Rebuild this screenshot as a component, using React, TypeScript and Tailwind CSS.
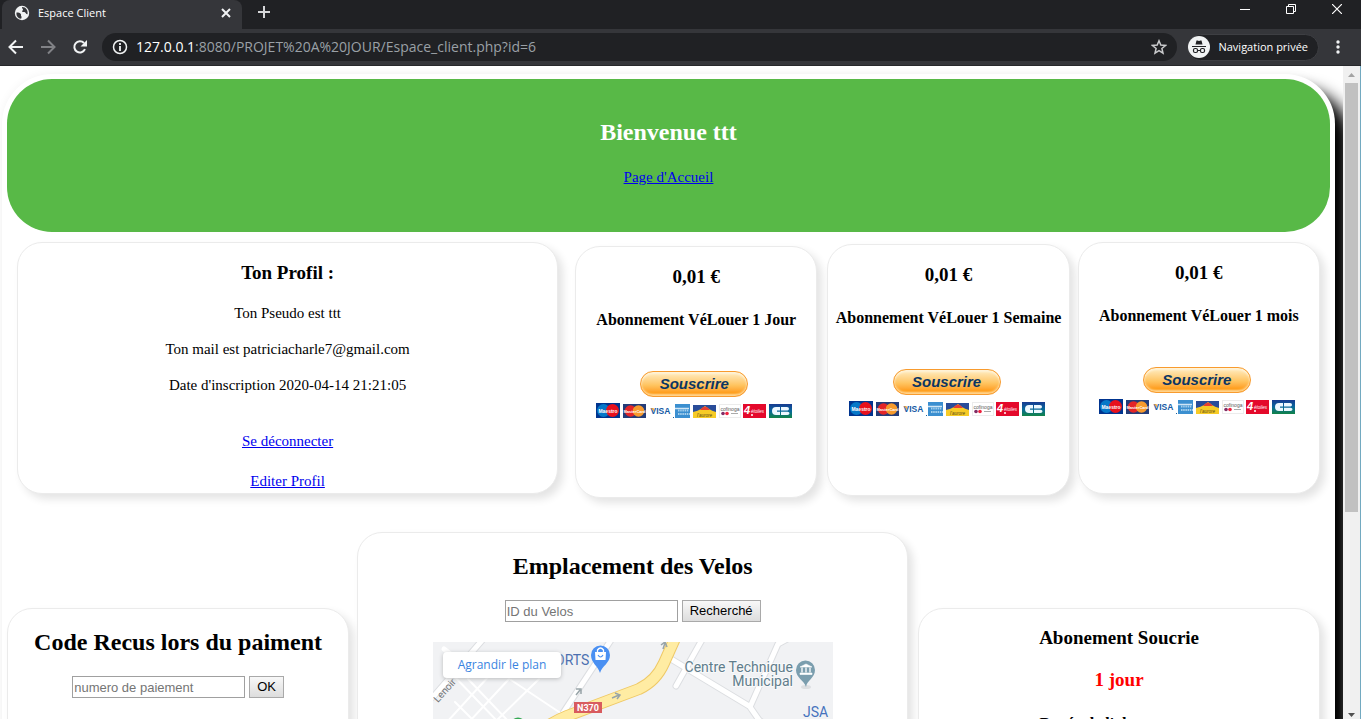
import type { ReactNode } from "react";

const card = "min-w-0 rounded-[25px] border border-[#ebebeb] bg-white text-center shadow-[5px_5px_8px_#e4e4e4]";
const link = "text-[#0000ee] underline";

function BrowserChrome() {
  return (
    <header className="shrink-0 border-b border-[#27282b] bg-[#35363a] font-['Open_Sans',sans-serif] text-white">
      <div className="flex h-[29px] items-start bg-[#202124]">
        <div className="ml-0.5 flex h-full w-60 items-center rounded-t-lg bg-[#35363a] pl-3 pr-2.5">
          <svg className="mb-1 size-4 shrink-0" viewBox="0 0 16 16" aria-hidden="true">
            <circle cx="8" cy="8" r="7.2" fill="#f1f3f4" />
            <path d="M2.5 7.5c2 0 3.5.3 4.300 1.500.7 1-.2 1.500.5 2.300.5.600.3 1.500-.2 2.500C4 13.500 2 11 2.500 7.500zM8 2c-.2 1.500 1 1.500 1 2.600S7.500 6 8.300 6.800c.9.9 2.300.1 3.200 1 .6.600.7 1.700 2 1.500C14.300 5.500 12 2 8 2z" fill="#35363a" />
          </svg>
          <span className="mb-1 ml-2 flex-1 text-[11px] leading-4">Espace Client</span>
          <button aria-label="Fermer l'onglet" className="mb-1 flex size-3 items-center justify-center">
            <svg className="size-2.5" viewBox="0 0 10 10" stroke="#f1f3f4" strokeWidth="2"><path d="M1 1l8 8M9 1L1 9" /></svg>
          </button>
        </div>
        <button aria-label="Nouvel onglet" className="ml-4 mt-1.5 size-3">
          <svg className="size-3" viewBox="0 0 12 12" stroke="#d5d6d8" strokeWidth="2"><path d="M6 0v12M0 6h12" /></svg>
        </button>
        <div className="ml-auto mr-[19px] mt-1 flex items-center gap-9">
          <button aria-label="Réduire" className="size-2.5"><svg className="size-2.5" viewBox="0 0 10 10" stroke="#fff"><path d="M0 5.500h10" /></svg></button>
          <button aria-label="Restaurer" className="size-2.5"><svg className="size-2.5" viewBox="0 0 10 10" fill="none" stroke="#fff"><path d="M.5 2.500h7v7h-7zM2.500 2.500v-2h7v7h-2" /></svg></button>
          <button aria-label="Fermer" className="size-2.5"><svg className="size-2.5" viewBox="0 0 10 10" stroke="#fff" strokeWidth="1.200"><path d="M0 0l10 10M10 0L0 10" /></svg></button>
        </div>
      </div>
      <div className="flex h-9 items-center pl-2 pr-[15px]">
        <button aria-label="Retour" className="size-4"><svg className="size-4" viewBox="0 0 16 16" fill="none" stroke="#f1f3f4" strokeWidth="2"><path d="M15 8H2M8 1.500L1.500 8 8 14.500" /></svg></button>
        <button aria-label="Avancer" className="ml-4 size-4"><svg className="size-4" viewBox="0 0 16 16" fill="none" stroke="#818286" strokeWidth="2"><path d="M1 8h13M8 1.500L14.500 8 8 14.500" /></svg></button>
        <button aria-label="Actualiser" className="ml-4 size-4"><svg className="size-4" viewBox="0 0 16 16"><path d="M13 10.200A5.600 5.600 0 1 1 12 4" fill="none" stroke="#f1f3f4" strokeWidth="2" /><path d="M15 1v6.500H8.500z" fill="#f1f3f4" /></svg></button>
        <div className="ml-3.5 flex h-7 min-w-0 flex-1 items-center rounded-full bg-[#202124] pl-2.5 pr-2.5">
          <svg className="size-4 shrink-0" viewBox="0 0 16 16" fill="none" stroke="#f1f3f4"><circle cx="8" cy="8" r="6.500" strokeWidth="1.500" /><path d="M8 7v5M8 4v2" strokeWidth="1.800" /></svg>
          <span className="ml-2 flex-1 truncate text-sm text-[#9aa0a6]"><span className="text-white">127.0.0.1</span>:8080/PROJET%20A%20JOUR/Espace_client.php?id=6</span>
          <button aria-label="Ajouter aux favoris" className="size-4"><svg className="size-4" viewBox="0 0 16 16" fill="none" stroke="#c9cacc" strokeWidth="1.500"><path d="M8 1.800l1.800 4.300 4.700.4-3.600 3 1.100 4.600L8 11.700l-4 2.400 1.100-4.600-3.600-3 4.700-.4z" /></svg></button>
        </div>
        <div className="ml-2.5 flex h-[27px] items-center rounded-full border border-[#3e3f43] bg-[#202124] pr-2.5">
          <svg className="size-[22px]" viewBox="0 0 22 22"><circle cx="11" cy="11" r="11" fill="#f1f3f4" /><path d="M7.500 8.500l1-4h1l1.500.5 1.500-.5h1l1 4z" fill="#202124" /><path d="M4 10.500h14M10 14.500h2" stroke="#202124" /><g fill="none" stroke="#202124" strokeWidth="1.200"><rect x="5.500" y="12.500" width="4" height="4" rx="1.500" /><rect x="12.500" y="12.500" width="4" height="4" rx="1.500" /></g></svg>
          <span className="ml-2 text-[11px] leading-4">Navigation privée</span>
        </div>
        <button aria-label="Menu" className="ml-[11px] size-4"><svg className="size-4" viewBox="0 0 16 16" fill="#f1f3f4"><circle cx="8" cy="3" r="1.700" /><circle cx="8" cy="8" r="1.700" /><circle cx="8" cy="13" r="1.700" /></svg></button>
      </div>
    </header>
  );
}

function PaymentLogos() {
  return (
    <svg className="mx-auto mt-[5px] h-4 w-[198px]" viewBox="0 0 198 16" fontFamily="Liberation Sans, sans-serif" aria-hidden="true">
      <rect x="1" y="1" width="24" height="15" fill="#00348f" /><circle cx="8.500" cy="8.500" r="6.500" fill="#0678c8" /><circle cx="17.500" cy="8.500" r="6.500" fill="#e8101c" /><text x="13" y="10.500" fontSize="5" fontWeight="700" fill="#fff" textAnchor="middle">Maestro</text>
      <rect x="28" y="2" width="23" height="14" fill="#243c78" /><circle cx="35.500" cy="9" r="5.800" fill="#e42528" /><circle cx="43.500" cy="9" r="5.800" fill="#f79a2c" /><text x="39.500" y="10.500" fontSize="4" fontWeight="700" fill="#fff" textAnchor="middle">MasterCard</text>
      <text x="65.500" y="12" fontSize="8.500" fontWeight="700" fill="#155aa5" textAnchor="middle">VISA</text><path d="M56 6h2.500l1 4z" fill="#e9a53a" />
      <rect x="80" y="2" width="15" height="14" fill="#3b8fd0" /><path d="M80 6.500h14" stroke="#cfe5f5" strokeWidth="1.500" /><path d="M83 8.500h11M83 12h12" stroke="#a5cfec" strokeWidth="2" strokeDasharray="1.500 .7" /><rect x="78" y="15" width="1" height="1" fill="#17609f" />
      <rect x="98" y="3" width="23" height="13" fill="#294c99" /><path d="M98 10q5-1 8-3l4-3 4 3q3 2 7 3v6H98z" fill="#f7cb26" /><path d="M105 8q5-7 10 0z" fill="#e73e32" /><text x="109.500" y="14.500" fontSize="4.500" fontStyle="italic" fill="#564916" textAnchor="middle">l'aurore</text>
      <rect x="124.500" y="2.500" width="21" height="13" fill="#fff" stroke="#ececec" /><text x="135" y="8.500" fontSize="5" fill="#5d5d5d" textAnchor="middle">cofinoga</text><circle cx="128" cy="11.500" r="1.800" fill="#812d65" /><circle cx="132" cy="11.500" r="1.800" fill="#ef223e" /><path d="M136 11.500h7" stroke="#aaa" />
      <rect x="148" y="2" width="23" height="14" fill="#e4092b" /><text x="149" y="12" fontSize="11" fontStyle="italic" fontWeight="700" fill="#fff">4</text><text x="156" y="11" fontSize="4.500" fontStyle="italic" fill="#fff">étoiles</text><circle cx="157" cy="13" r="1" fill="#fff" />
      <defs><linearGradient id="cb" x2="0" y2="1"><stop stopColor="#173a91" /><stop offset=".5" stopColor="#07689c" /><stop offset="1" stopColor="#128447" /></linearGradient></defs>
      <rect x="174" y="2" width="23" height="14" fill="url(#cb)" /><path d="M185 5h-4a4 4 0 0 0 0 8h4V9.700h-3V8.500h3zM186 5h6q2 0 2 1.700t-1.500 1.800h-6.500zM186 9.700h6.500q2 0 2 1.600t-2 1.700h-6.500z" fill="#edf8ff" />
    </svg>
  );
}

function Subscription({ name, className }: { name: string; className: string }) {
  return (
    <section className={`${card} flex-[242] ${className}`}>
      <h3 className="mt-[19px] text-[19px] font-bold leading-[22px]">0,01 €</h3>
      <h4 className="mt-[23px] whitespace-nowrap text-base font-bold leading-[18px]">{name}</h4>
      <div className="mt-[42px] pr-1">
        <button className="block mx-auto h-[26px] w-[108px] rounded-full border border-[#f89b2e] bg-linear-to-b from-[#ffe6b2] from-10% via-[#ffc45f] via-55% to-[#ff9e1b] to-85% font-['Liberation_Sans',sans-serif] text-[15px] font-bold italic leading-5 text-[#0b3563] shadow-[inset_0_2px_2px_#fff3d8,inset_0_-2px_2px_#ffd591]">
          Souscrire
        </button>
        <PaymentLogos />
      </div>
    </section>
  );
}

function SearchForm({ label, children }: { label: string; children: ReactNode }) {
  return (
    <form className="mt-5 flex justify-center gap-1 font-['Liberation_Sans',sans-serif]" onSubmit={(e) => e.preventDefault()}>
      <input aria-label={label} placeholder={label} className="h-[22px] w-[173px] border border-[#a0a0a0] bg-white px-px text-[13px] leading-[18px] placeholder:text-[#757575]" />
      <button className="h-[22px] border border-[#a9a9a9] bg-linear-to-b from-[#f8f8f8] to-[#dddddd] px-[7px] text-[13px] leading-5">{children}</button>
    </form>
  );
}

function BikeMap() {
  return (
    <div className="relative mx-auto mt-5 h-[300px] w-[400px] max-w-full overflow-hidden bg-[#f1f2f4]">
      <svg className="h-[300px] w-[400px]" viewBox="0 0 400 300" fontFamily="Roboto, sans-serif">
        <g fill="none" strokeLinecap="round" strokeLinejoin="round">
          <g stroke="#dcdee1" strokeWidth="7"><path d="M180-5L128 74M52-5L0 55M270-4L243 44M358-5L345 2 317 65 326 78 345 92 348 120M238 17L316 64" /></g>
          <g stroke="#fff" strokeWidth="5"><path d="M180-5L128 74M52-5L0 55M270-4L243 44M358-5L345 2 317 65 326 78 345 92 348 120M238 17L316 64" /></g>
          <g stroke="#fff" strokeWidth="2"><path d="M20 33l46 48M35 37l42 44M78 38l54 36M22 60l20 20M14 80L56 34M36 80l40-43M62 80l44-43" /></g>
          <path d="M11 7l20 16" stroke="#fff" strokeWidth="5" />
          <path d="M100 96q14-14 34-22l72-27q17-8 25-26L244-8" stroke="#efc966" strokeWidth="12" />
          <path d="M100 96q14-14 34-22l72-27q17-8 25-26L244-8" stroke="#ffeca3" strokeWidth="10" />
        </g>
        <g fill="none" stroke="#98a4a8" strokeWidth="1.500"><path d="M143 53l4-5m-4-1h5v5M179 56l7-3m-4-2l5 2-3 4M230 7l2-6m-4 2l4-3 2 5" /></g>
        <text x="122" y="23" fontSize="14" fill="#4c70b0">ORTS</text>
        <path d="M167 31c-2-7-9-10-9-18a9.500 9.500 0 0 1 19 0c0 8-8 11-10 18z" fill="#4a90f2" />
        <path d="M162 10h11l-.5 8h-10z" fill="#fff" /><path d="M164.500 10V8q3-4 6 0v2" fill="none" stroke="#fff" strokeWidth="1.300" /><path d="M165 13q2.500 4 5 0" fill="none" stroke="#4a90f2" strokeWidth="1.200" />
        <g fontSize="14" fill="#607d8b" stroke="#f8f9fa" strokeWidth="2" paintOrder="stroke"><text x="360" y="30" textAnchor="end">Centre Technique</text><text x="360" y="44" textAnchor="end">Municipal</text></g>
        <ellipse cx="373" cy="45" rx="5" ry="2" fill="#dddfe1" />
        <path d="M373 45c-2-7-10-9-10-17a9.500 9.500 0 0 1 19 0c0 8-8 10-9 17z" fill="#7b9eae" />
        <path d="M367 25l6-3 6 3zM367 31h12v1.500h-12z" fill="#fff" stroke="#fff" strokeWidth=".6" /><path d="M369 25.500v5M373 25.500v5M377 25.500v5" stroke="#fff" strokeWidth="1.300" />
        <rect x="141" y="60" width="28" height="11" fill="#d85b5e" /><text x="155" y="69" fontSize="9" fontWeight="700" fill="#fff" textAnchor="middle">N370</text>
        <text x="370" y="75" fontSize="14" fill="#4672bd">JSA</text>
        <text x="5" y="61" fontSize="10" fill="#737679" transform="rotate(-48 5 61)">Lenoir</text>
        <circle cx="85" cy="83" r="7.500" fill="#34a853" />
      </svg>
      <a href="#plan" className="absolute left-2.5 top-2.5 rounded-sm bg-white px-[15px] py-1 font-['Open_Sans',sans-serif] text-xs leading-[18px] text-[#3a84df] shadow-[0_1px_4px_#b9babc]">Agrandir le plan</a>
    </div>
  );
}

function PageScrollbar() {
  return (
    <div className="flex w-[18px] shrink-0 flex-col items-center border-r border-[#72a9c0] bg-[#f0f0f0]" aria-hidden="true">
      <svg className="h-[17px] w-[17px] shrink-0" viewBox="0 0 17 17"><path d="M5 11l3.500-4 3.500 4z" fill="#a3a3a3" /></svg>
      <div className="h-[429px] w-[13px] bg-[#c1c1c1]" />
      <svg className="mt-auto h-[11px] w-[17px] shrink-0" viewBox="0 0 17 11"><path d="M5 5h7L8.500 9z" fill="#505050" /></svg>
    </div>
  );
}

export default function App() {
  return (
    <div className="flex h-screen flex-col overflow-hidden bg-white">
      <BrowserChrome />
      <div className="flex min-h-0 flex-1">
        <main className="min-w-0 flex-1 overflow-hidden bg-white pl-0.5 pr-2 pt-2 font-['Liberation_Serif',serif] text-[15px] leading-[18px] text-black">
          <div className="min-h-[1200px] rounded-[50px] bg-white px-[5px] pb-10 pt-[5px] shadow-[16px_16px_16px_#000,0_0_10px_#f4f4f4]">
            <div className="h-[153px] rounded-[45px] bg-[#58b947] pt-[39px] text-center">
              <h1 className="text-2xl font-bold leading-7 text-white">Bienvenue ttt</h1>
              <p className="mt-[22px]"><a href="#accueil" className={link}>Page d'Accueil</a></p>
            </div>
            <div className="flex items-start px-2.5 pt-2.5">
              <section className={`${card} h-[252px] flex-[543]`}>
                <h3 className="mt-[19px] text-[19px] font-bold leading-[22px]">Ton Profil :</h3>
                <p className="mt-5">Ton Pseudo est ttt</p>
                <p className="mt-[18px]">Ton mail est patriciacharle7@gmail.com</p>
                <p className="mt-[18px]">Date d'inscription 2020-04-14 21:21:05</p>
                <p className="mt-[38px]"><a href="#deconnexion" className={link}>Se déconnecter</a></p>
                <p className="mt-[22px]"><a href="#editer" className={link}>Editer Profil</a></p>
              </section>
              <Subscription name="Abonnement VéLouer 1 Jour" className="ml-[17px] mt-1 h-[252px]" />
              <Subscription name="Abonnement VéLouer 1 Semaine" className="ml-2.5 mt-0.5 h-[252px]" />
              <Subscription name="Abonnement VéLouer 1 mois" className="ml-2 h-[252px]" />
            </div>
            <div className="mt-[34px] flex items-start pr-2.5">
              <section className={`${card} mt-[76px] h-[400px] flex-[342]`}>
                <h2 className="mt-[19px] text-2xl font-bold leading-7">Code Recus lors du paiment</h2>
                <SearchForm label="numero de paiement">OK</SearchForm>
              </section>
              <section className={`${card} ml-2 h-[500px] flex-[552]`}>
                <h2 className="mt-[19px] text-2xl font-bold leading-7">Emplacement des Velos</h2>
                <SearchForm label="ID du Velos">Recherché</SearchForm>
                <BikeMap />
              </section>
              <section className={`${card} ml-2.5 mt-[76px] h-[400px] flex-[402]`}>
                <h3 className="mt-[18px] text-[19px] font-bold leading-[22px]">Abonement Soucrie</h3>
                <p className="mt-5 text-[19px] font-bold leading-[22px] text-[#ff0000]">1 jour</p>
                <p className="mt-[22px] text-base font-bold leading-[22px]">Durée de l'abonnement</p>
              </section>
            </div>
          </div>
        </main>
        <PageScrollbar />
      </div>
    </div>
  );
}
